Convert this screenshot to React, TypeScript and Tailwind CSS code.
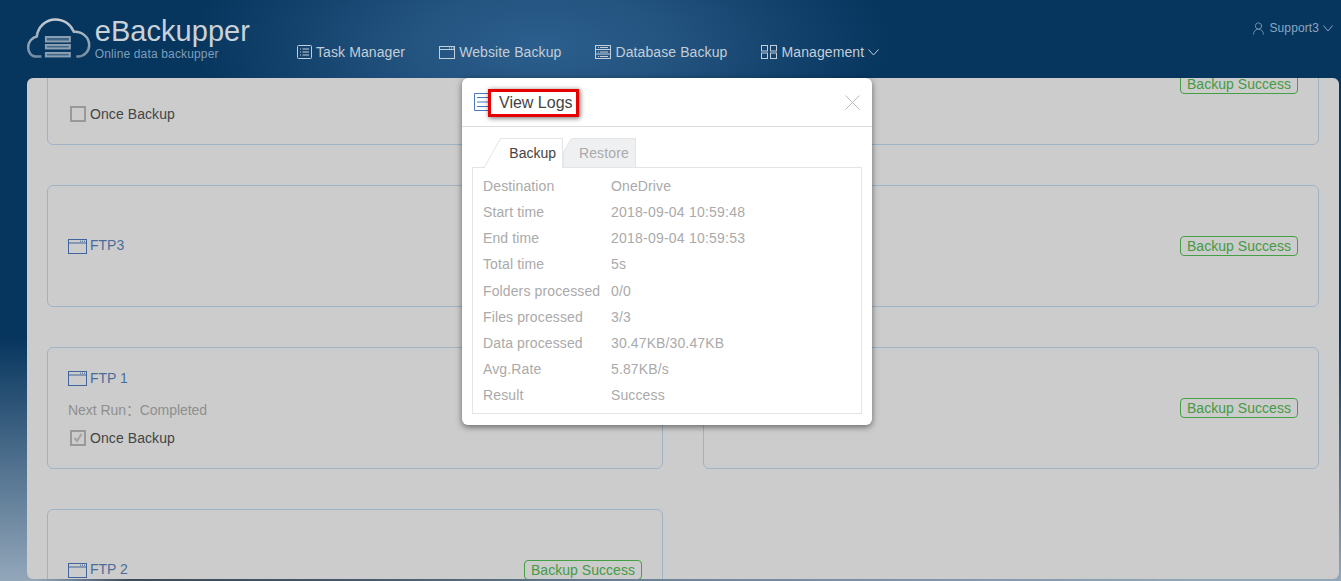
import { UserRound } from 'lucide-react'

const navItems = [
  { label: 'Task Manager', icon: 'task' },
  { label: 'Website Backup', icon: 'window' },
  { label: 'Database Backup', icon: 'database' },
  { label: 'Management', icon: 'grid' },
]

const logRows = [
  ['Destination', 'OneDrive'],
  ['Start time', '2018-09-04 10:59:48'],
  ['End time', '2018-09-04 10:59:53'],
  ['Total time', '5s'],
  ['Folders processed', '0/0'],
  ['Files processed', '3/3'],
  ['Data processed', '30.47KB/30.47KB'],
  ['Avg.Rate', '5.87KB/s'],
  ['Result', 'Success'],
]

type Job = {
  name?: string
  full?: boolean
  checked?: boolean
  completed?: boolean
  badge?: boolean
}

const jobs: Job[] = [
  { full: true },
  { full: false, badge: true },
  { name: 'FTP3' },
  { badge: true },
  { name: 'FTP 1', full: true, completed: true, checked: true },
  { badge: true },
  { name: 'FTP 2', badge: true },
]

function Chevron({ width }: { width: number }) {
  return (
    <svg width={width} height="7" viewBox={`0 0 ${width} 7`} fill="none" stroke="currentColor">
      <path d={`M0.500 0.500L${width / 2} 6L${width - 0.5} 0.500`} />
    </svg>
  )
}

function NavIcon({ type }: { type: string }) {
  if (type === 'task') {
    return (
      <svg width="15" height="14" viewBox="0 0 15 14" fill="none" stroke="currentColor">
        <rect x="0.5" y="0.5" width="14" height="13" rx="1" />
        <path d="M3 4h1M3 7h1M3 10h1M5.500 4h6.500M5.500 7h6.500M5.500 10h6.500" />
      </svg>
    )
  }
  if (type === 'window') {
    return (
      <svg width="16" height="13" viewBox="0 0 16 13" fill="none" stroke="currentColor">
        <rect x="0.5" y="0.500" width="15" height="12" />
        <path d="M0.500 3.500h15M10 2h1M12 2h1M14 2h1" />
      </svg>
    )
  }
  if (type === 'database') {
    return (
      <svg width="16" height="14" viewBox="0 0 16 14" fill="none" stroke="currentColor">
        <rect x="0.5" y="0.5" width="15" height="13" />
        <path d="M0.500 4.500h15M0.500 9h15M3 2.500h1M3 7h1M3 11.500h1M5 2.500h8M5 7h8M5 11.500h8" />
      </svg>
    )
  }
  return (
    <svg width="16" height="14" viewBox="0 0 16 14" fill="none" stroke="currentColor">
      <rect x="0.5" y="0.5" width="6" height="5.500" />
      <rect x="9.500" y="0.5" width="6" height="5.500" />
      <rect x="0.5" y="8" width="6" height="5.500" />
      <rect x="9.500" y="8" width="6" height="5.500" />
    </svg>
  )
}

function CloudLogo() {
  return (
    <svg width="64" height="40" viewBox="0 0 64 40" fill="none">
      <defs>
        <linearGradient id="cloudStroke" x1="0" y1="0" x2="0" y2="1">
          <stop offset="0" stopColor="#c6ccd2" />
          <stop offset="1" stopColor="#748ca1" />
        </linearGradient>
      </defs>
      <path
        d="M14.500 38.700H9C4 38.700 1.200 34 1.200 29.500 1.200 24 5 19.500 9.800 18.500 11 8.500 19 1.300 28.500 1.300c8.500 0 15.500 5 18.500 12.500 8.500-.5 15.500 5.500 15.500 13.200 0 6.500-5 11.700-11.500 11.700h-1.500"
        stroke="url(#cloudStroke)"
        strokeWidth="2.500"
      />
      <rect x="19" y="19" width="24" height="4.500" fill="#3f6484" stroke="#8ba0b3" strokeWidth="2" />
      <rect x="19" y="27" width="24" height="3.500" fill="#3f6484" stroke="#8ba0b3" strokeWidth="2" />
      <rect x="19" y="35" width="24" height="3.500" fill="#3f6484" stroke="#8ba0b3" strokeWidth="2" />
    </svg>
  )
}

function WindowIcon() {
  return (
    <svg width="19" height="15" viewBox="0 0 19 15" fill="none" stroke="#40659c" className="shrink-0">
      <rect x="0.5" y="0.5" width="18" height="14" />
      <path d="M0.500 4h18M12 2.200h1M14 2.200h1M16 2.200h1" />
    </svg>
  )
}

function OnceBackup({ checked }: { checked?: boolean }) {
  return (
    <div className="mt-2 flex h-5 items-center pl-[2px] text-[14px] tracking-[0.08px] text-[#444]">
      <span className="mr-1 flex h-4 w-4 items-center justify-center border-2 border-[#999] bg-[#ccc]">
        {checked && (
          <svg width="10" height="10" viewBox="0 0 10 10" fill="none" stroke="#a3a3a3" strokeWidth="2">
            <path d="M1.500 5l2.500 3 4.500-7" />
          </svg>
        )}
      </span>
      Once Backup
    </div>
  )
}

function JobCard({ job }: { job: Job }) {
  return (
    <div className="flex h-[122px] items-center justify-between rounded-[6px] border border-[#9fb3c6] px-5">
      <div className="flex flex-col">
        {job.name && (
          <div className="flex h-5 items-center gap-[3px] text-[14px] text-[#4a6c9a]">
            <WindowIcon />
            <span className={job.full ? '' : '-translate-y-px'}>{job.name}</span>
          </div>
        )}
        {job.full && !job.name && <div className="h-5" />}
        {job.full && (
          <>
            <div className="mt-3 flex h-5 items-center text-[14px] tracking-[-0.06px] text-[#8f8f8f]">
              {job.completed ? 'Next Run：Completed' : ''}
            </div>
            <OnceBackup checked={job.checked} />
          </>
        )}
      </div>
      {job.badge && (
        <span className="flex h-5 items-center rounded-[4px] border border-[#45a045] px-[6px] text-[14px] tracking-[0.04px] text-[#459a45]">
          Backup Success
        </span>
      )}
    </div>
  )
}

function LogsModal() {
  return (
    <div className="absolute left-[462px] top-[78px] h-[347px] w-[410px] rounded-[6px] bg-white shadow-[0_2px_6px_rgba(0,0,0,0.5)]">
      <div className="relative flex h-[49px] items-center border-b border-[#ddd] pl-3">
        <svg width="15" height="18" viewBox="0 0 15 18" fill="none" stroke="#4a78c0">
          <path d="M14 0.500H0.500V17.500H14M3 4.500h11M3 9h11M3 13.500h11" />
        </svg>
        <span className="ml-[10px] translate-y-px text-[16px] text-[#444]">View Logs</span>
        <div className="absolute left-[26px] top-[11px] h-[28px] w-[91px] border-[3px] border-[#e60000] shadow-[1px_1px_5px_rgba(0,0,0,0.6)]" />
        <svg className="ml-auto mr-[13px] translate-x-px" width="15" height="15" viewBox="0 0 15 15" fill="none" stroke="#bbb">
          <path d="M0.500 0.500l14 14M14.500 0.500l-14 14" />
        </svg>
      </div>
      <div className="mt-[11px] flex h-[29px] pl-[22px] text-[14px]">
        <div className="relative z-10 flex h-[30px] w-[79px] items-center justify-end pr-[7px] text-[#444]">
          <svg className="absolute left-0 top-0" width="79" height="30" viewBox="0 0 79 30" fill="white" stroke="#e4e4e4">
            <path d="M0 30L16.500 0.500H78.500V30" />
          </svg>
          <span className="relative">Backup</span>
        </div>
        <div className="relative flex h-[30px] w-[73px] items-center justify-end pr-[7px] tracking-[0.15px] text-[#aaa]">
          <svg className="absolute left-0 top-0" width="73" height="30" viewBox="0 0 73 30" fill="#eff0f2" stroke="#e4e4e4">
            <path d="M0 15L8.500 0.500H72.500V29.500H0Z" />
          </svg>
          <span className="relative">Restore</span>
        </div>
      </div>
      <div className="mx-[10px] h-[247px] border border-[#e4e4e4] px-[10px] pt-[5.45px] text-[14px] tracking-[0.12px] text-[#aaa]">
        {logRows.map(([label, value]) => (
          <div key={label} className="flex h-[26.125px] items-center">
            <span className="w-[128px]">{label}</span>
            <span className={value.length > 16 ? 'tracking-[0.22px]' : ''}>{value}</span>
          </div>
        ))}
      </div>
    </div>
  )
}

export default function App() {
  return (
    <div className="relative h-[581px] w-[1341px] overflow-hidden bg-[#06355e] font-['Liberation_Sans','Noto_Sans_CJK_SC',Arial,sans-serif]">
      <div className="absolute inset-0 bg-[radial-gradient(ellipse_350px_150px_at_540px_45px,#2c5f8e_0%,#245480_35%,rgba(6,53,94,0)_100%),linear-gradient(180deg,rgba(6,53,94,0)_58%,#93a7ba_100%)]" />
      <header className="relative flex h-[78px] pl-[27px]">
        <div className="mt-[18px] flex w-[223px] shrink-0 items-start">
          <CloudLogo />
          <div className="ml-[4px] -mt-[4px]">
            <div className="text-[29px] leading-[34px] tracking-[0.05px] text-[#c9d1d9]">eBackupper</div>
            <div className="-mt-[1px] text-[12px] leading-[14px] tracking-[0.15px] text-[#7e9fbb]">Online data backupper</div>
          </div>
        </div>
        <nav className="ml-[47px] mt-[42px] flex h-5 items-center gap-[34px] text-[14px] tracking-[0.1px] text-[#c3ced8]">
          {navItems.map((item) => (
            <div key={item.label} className="flex items-center gap-1">
              <NavIcon type={item.icon} />
              <span>{item.label}</span>
              {item.label === 'Management' && <Chevron width={11} />}
            </div>
          ))}
        </nav>
        <div className="ml-auto mr-2 mt-[20px] flex h-4 items-center gap-1 text-[12px] tracking-[0.1px] text-[#8aa7c0]">
          <UserRound size={15} strokeWidth={1.200} className="-ml-px" />
          <span className="-ml-px">Support3</span>
          <Chevron width={10} />
        </div>
      </header>
      <main className="relative ml-[27px] h-[501px] w-[1312px] overflow-hidden rounded-[6px] bg-[#ccc]">
        <div className="-mt-[55px] ml-5 grid w-[1272px] grid-cols-2 gap-10">
          {jobs.map((job, index) => (
            <JobCard key={index} job={job} />
          ))}
        </div>
      </main>
      <div className="absolute bottom-0 left-0 h-[2px] w-full bg-[linear-gradient(90deg,rgba(61,74,88,0)_35px,#3d4a58_130px,#46586a_350px,#6d8398_650px,rgba(109,131,152,0)_1200px)]" />
      <LogsModal />
    </div>
  )
}
